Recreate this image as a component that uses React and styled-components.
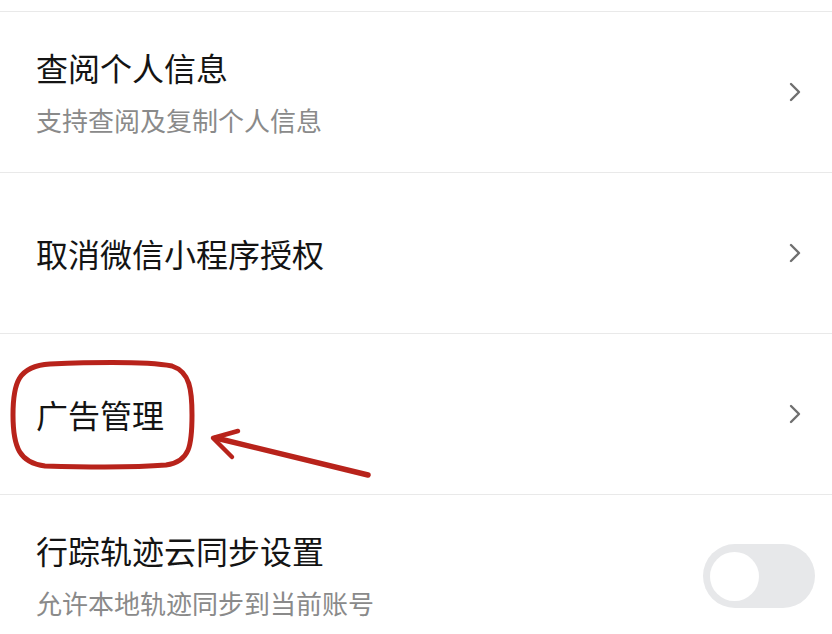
import React from "react";
import styled, { createGlobalStyle } from "styled-components";

const Global = createGlobalStyle`
  html, body { margin: 0; padding: 0; background: #ffffff; }
  body { font-family: "Noto Sans CJK SC", "Noto Sans", sans-serif; }
`;

const Page = styled.div`
  position: relative;
  width: 832px;
  height: 634px;
  overflow: hidden;
  background: #ffffff;
  padding-top: 11px;
  box-sizing: border-box;
`;

const List = styled.div`
  display: flex;
  flex-direction: column;
`;

const Row = styled.div`
  display: flex;
  align-items: center;
  justify-content: space-between;
  height: 161px;
  flex-shrink: 0;
  box-sizing: border-box;
  border-top: 1.5px solid #e9e9e9;
  padding-left: 36px;
  padding-right: ${(p) => (p.$toggle ? "17px" : "30px")};
`;

const TextCol = styled.div`
  display: flex;
  flex-direction: column;
  gap: 16px;
`;

const Title = styled.div`
  font-size: 32px;
  line-height: 40px;
  color: #141414;
`;

const Sub = styled.div`
  font-size: 26px;
  line-height: 34px;
  color: #8a8a8a;
`;

const Track = styled.div`
  width: 112px;
  height: 64px;
  border-radius: 32px;
  background: #e7e8ea;
  display: flex;
  align-items: center;
  padding-left: 7px;
  box-sizing: border-box;
  margin-top: 2px;
`;

const Knob = styled.div`
  width: 49px;
  height: 49px;
  border-radius: 50%;
  background: #ffffff;
`;

const Overlay = styled.svg`
  position: absolute;
  left: 0;
  top: 0;
  pointer-events: none;
`;

const Chevron = () => (
  <svg width="14" height="22" viewBox="0 0 14 22">
    <path d="M3 3 L11 11 L3 19" fill="none" stroke="#6f6f6f" strokeWidth="2.4" strokeLinecap="round" strokeLinejoin="round" />
  </svg>
);

export default function App() {
  return (
    <Page>
      <Global />
      <List>
        <Row>
          <TextCol>
            <Title>查阅个人信息</Title>
            <Sub>支持查阅及复制个人信息</Sub>
          </TextCol>
          <Chevron />
        </Row>
        <Row>
          <TextCol>
            <Title>取消微信小程序授权</Title>
          </TextCol>
          <Chevron />
        </Row>
        <Row>
          <TextCol>
            <Title>广告管理</Title>
          </TextCol>
          <Chevron />
        </Row>
        <Row $toggle>
          <TextCol>
            <Title>行踪轨迹云同步设置</Title>
            <Sub>允许本地轨迹同步到当前账号</Sub>
          </TextCol>
          <Track>
            <Knob />
          </Track>
        </Row>
      </List>
      <Overlay width="832" height="634" viewBox="0 0 832 634">
        <path
          d="M50 364 C 100 362, 150 362, 172 366 C 190 372, 192 390, 192 415 C 192 445, 190 462, 166 465 C 130 468, 80 467, 45 466 C 20 463, 13 448, 13 415 C 13 383, 18 366, 50 364 Z"
          fill="none"
          stroke="#b8231b"
          strokeWidth="5"
        />
        <path d="M368 475 L216 438" fill="none" stroke="#b8231b" strokeWidth="5.5" strokeLinecap="round" />
        <path d="M238 431 L213 438 L232 457" fill="none" stroke="#b8231b" strokeWidth="4.5" strokeLinecap="round" strokeLinejoin="round" />
      </Overlay>
    </Page>
  );
}
